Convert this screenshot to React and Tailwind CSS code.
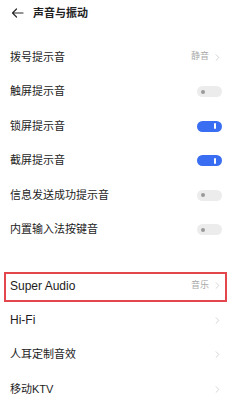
import { ChevronRight } from 'lucide-react'

const FONT = { fontFamily: '"Liberation Sans", "Noto Sans CJK SC", sans-serif' }

function Toggle({ on }) {
  return on ? (
    <div className="w-[25px] h-[11px] rounded-full bg-[#3a6ef2] flex items-center justify-end pr-[6px]">
      <div className="w-[2px] h-[6px] rounded-full bg-white" />
    </div>
  ) : (
    <div className="w-[25px] h-[11px] rounded-full bg-[#ececec] flex items-center pl-[4px]">
      <div className="w-[4px] h-[4px] rounded-full bg-[#9a9a9a]" />
    </div>
  )
}

function Row({ label, value, toggle, chevron, boxed, latin }) {
  return (
    <div className="relative h-[34.5px] flex items-center pl-[10px] pr-[10px]">
      <span className={latin ? 'flex-1 text-[12px] text-[#1c1c1c]' : 'flex-1 text-[11px] text-[#1c1c1c]'}>{label}</span>
      {value && <span className="text-[9px] text-[#a9a9a9] mr-[3px]">{value}</span>}
      {chevron && <ChevronRight size={11} strokeWidth={1.5} className="text-[#c2c2c2] -mr-[1px]" />}
      {toggle !== undefined && <Toggle on={toggle} />}
      {boxed && (
        <div className="absolute left-[4px] right-[5px] top-[3.5px] bottom-[1px] border-2 border-[#e3474d] pointer-events-none" />
      )}
    </div>
  )
}

export default function App() {
  return (
    <div className="w-[232px] h-[400px] bg-white overflow-hidden" style={FONT}>
      {/* header */}
      <div className="h-[26px] flex items-center pl-[11px] gap-[9px]">
        <svg width="13" height="10" viewBox="0 0 13 10" fill="none" stroke="#2a2a2a" strokeWidth="1.2" strokeLinecap="round" strokeLinejoin="round">
          <path d="M12 5H1.5M5.5 1L1.5 5l4 4" />
        </svg>
        <span className="text-[11px] font-bold text-[#222]">声音与振动</span>
      </div>
      <div className="h-[13.75px]" />

      <Row label="拨号提示音" value="静音" chevron />
      <Row label="触屏提示音" toggle={false} />
      <Row label="锁屏提示音" toggle={true} />
      <Row label="截屏提示音" toggle={true} />
      <Row label="信息发送成功提示音" toggle={false} />
      <Row label="内置输入法按键音" toggle={false} />

      <div className="h-[21.5px]" />

      <Row label="Super Audio" value="音乐" chevron boxed latin />
      <Row label="Hi-Fi" chevron latin />
      <Row label="人耳定制音效" chevron />
      <Row label="移动KTV" chevron />
    </div>
  )
}
